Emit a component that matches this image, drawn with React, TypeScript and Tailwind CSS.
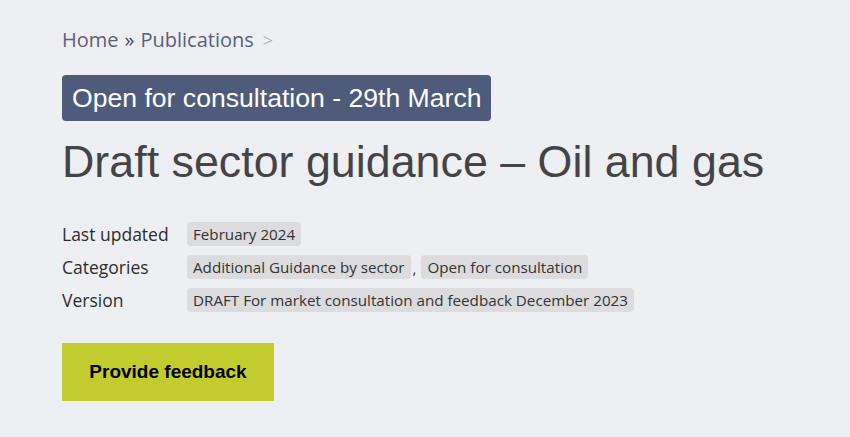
import React from 'react';

const Tag: React.FC<{ children: React.ReactNode }> = ({ children }) => (
  <span className="inline-block rounded-[4px] bg-[#dcdcdf] px-[6px] py-[2px] text-[15.2px] leading-[20px] text-[#333]">
    {children}
  </span>
);

const App: React.FC = () => {
  const rows: { label: string; values: string[] }[] = [
    { label: 'Last updated', values: ['February 2024'] },
    { label: 'Categories', values: ['Additional Guidance by sector', 'Open for consultation'] },
    { label: 'Version', values: ['DRAFT For market consultation and feedback December 2023'] },
  ];

  return (
    <div className="min-h-[437px] w-full bg-[#eeeff3] px-[62px] pt-[26px] font-['Open_Sans',sans-serif]">
      <nav className="flex items-center text-[20px] leading-[28px] text-[#5b5f7c]">
        <span className="text-[#625c7a]">Home</span>
        <span className="mx-[6px] text-[#3f4a6b]">»</span>
        <span className="text-[#55607d]">Publications</span>
        <span className="ml-[9px] text-[18px] text-[#b5b7bd]">&gt;</span>
      </nav>

      <div className="mt-[21px] inline-block rounded-[4px] bg-[#4e5b7a] px-[10px] py-[6px] font-['Liberation_Sans',sans-serif] text-[26.6px] leading-[34px] text-white">
        Open for consultation - 29th March
      </div>

      <h1 className="mt-[12px] font-['Liberation_Sans',sans-serif] text-[44.8px] leading-[56px] text-[#444446]">
        Draft sector guidance – Oil and gas
      </h1>

      <div className="mt-[33px] flex flex-col gap-[9px]">
        {rows.map(r => (
          <div key={r.label} className="flex items-center">
            <div className="w-[125px] text-[17.5px] leading-[24px] text-[#2d2d2d]">{r.label}</div>
            <div className="flex items-end">
              {r.values.map((v, i) => (
                <React.Fragment key={v}>
                  {i > 0 && <span className="mr-[5px] ml-[2px] text-[15px] text-[#333]">,</span>}
                  <Tag>{v}</Tag>
                </React.Fragment>
              ))}
            </div>
          </div>
        ))}
      </div>

      <button className="mt-[31px] flex h-[58px] w-[212px] items-center justify-center bg-[#c2cc2f] font-['Liberation_Sans',sans-serif] text-[19px] font-bold text-black">
        Provide feedback
      </button>
    </div>
  );
};

export default App;
